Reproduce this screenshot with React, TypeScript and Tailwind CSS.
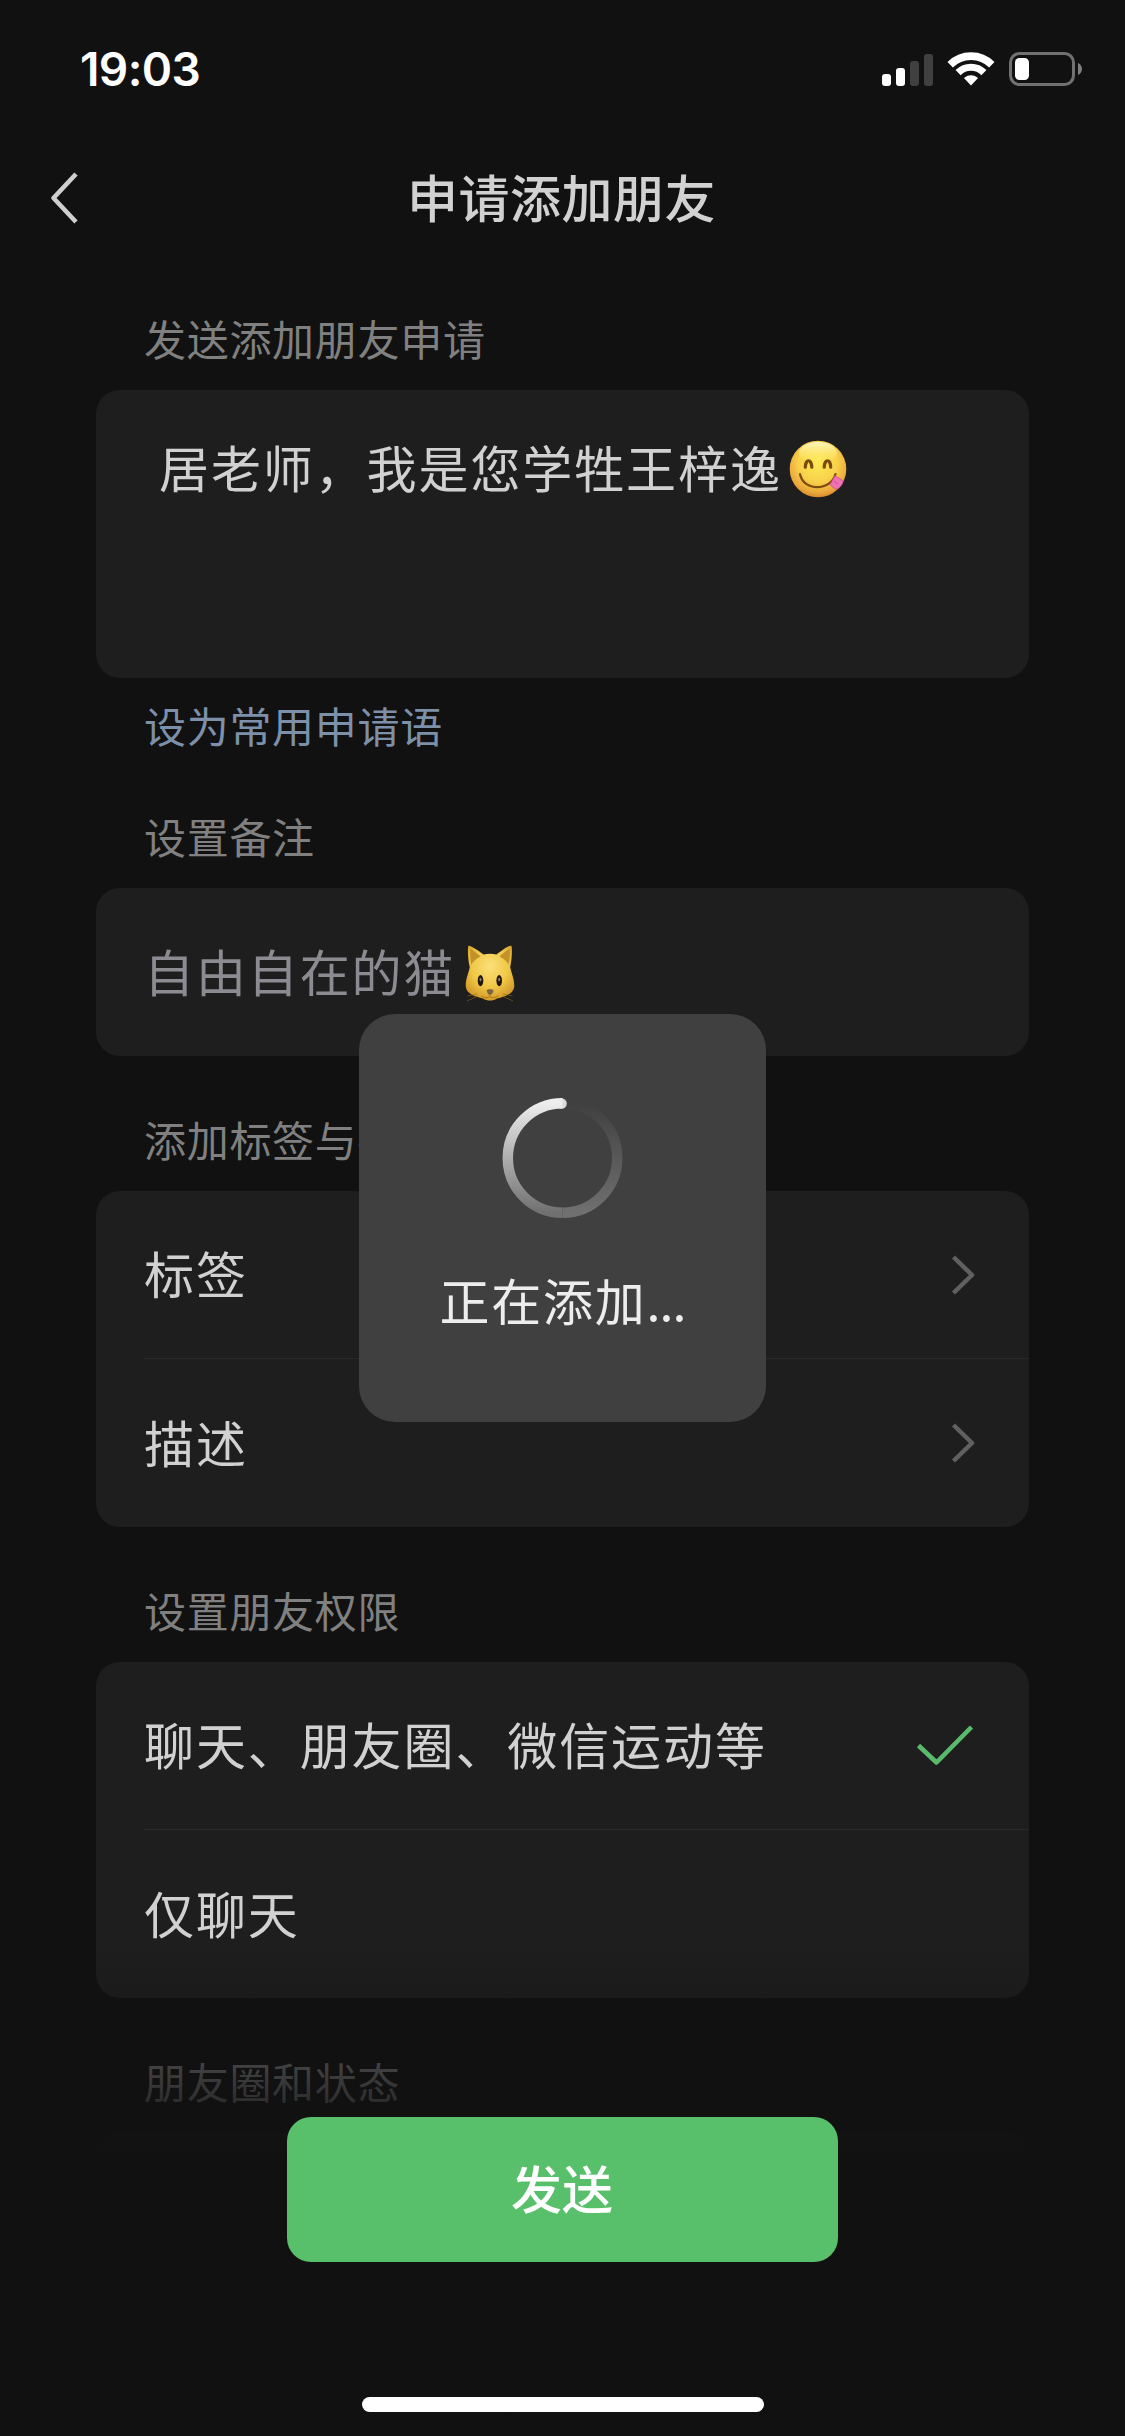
import React from "react";

interface SectionLabelProps {
  children: React.ReactNode;
  className?: string;
}

interface RowProps {
  title: string;
  divider?: boolean;
  children?: React.ReactNode;
}

const StatusBar: React.FC = () => {
  return (
    <div className="flex h-[132px] shrink-0 items-start justify-between pl-[80px] pr-[42px] pt-[50px] text-white">
      <span className="font-[Inter,sans-serif] text-[46px] font-semibold leading-[38px] tracking-[-0.6px]">
        19:03
      </span>
      <div className="flex items-center gap-[14px] pt-[2px]">
        <div className="flex h-[33px] items-end gap-[5px]">
          <span className="h-[12px] w-[9px] rounded-[3px] bg-white" />
          <span className="h-[18px] w-[9px] rounded-[3px] bg-white" />
          <span className="h-[25px] w-[9px] rounded-[3px] bg-[#404040]" />
          <span className="h-[32px] w-[9px] rounded-[3px] bg-[#404040]" />
        </div>
        <svg width="48" height="34" viewBox="0 0 48 34" fill="none">
          <path d="M3.2 12.7A29.4 29.4 0 0 1 44.8 12.7" stroke="#fff" strokeWidth="7.6" />
          <path d="M11.1 20.6A18.2 18.2 0 0 1 36.9 20.6" stroke="#fff" strokeWidth="7.2" />
          <path d="M24 33.5L17.4 26.6Q17 26 17.6 25.5A10.5 10.5 0 0 1 30.4 25.5Q31 26 30.6 26.6Z" fill="#fff" />
        </svg>
        <svg width="74" height="34" viewBox="0 0 74 34" fill="none">
          <rect x="1.5" y="1.5" width="63" height="31" rx="9" stroke="#717171" strokeWidth="3" />
          <rect x="6" y="6" width="14" height="22" rx="4.5" fill="#fff" />
          <path d="M69 11C74.3 13 74.3 21 69 23Z" fill="#808080" />
        </svg>
      </div>
    </div>
  );
};

const NavBar: React.FC = () => {
  return (
    <header className="grid h-[132px] shrink-0 grid-cols-[160px_1fr_162px] items-center">
      <svg className="ml-[48px]" width="32" height="54" viewBox="0 0 32 54" fill="none">
        <path d="M28 3L5.5 27L28 51" stroke="#cfcfcf" strokeWidth="4.6" strokeLinejoin="round" />
      </svg>
      <h1 className="pb-[5px] text-center text-[51px] font-medium leading-[60px] tracking-[0.5px]">申请添加朋友</h1>
    </header>
  );
};

const SectionLabel: React.FC<SectionLabelProps> = ({ children, className = "h-[135px]" }) => {
  return (
    <div className={`flex shrink-0 items-end pb-[22px] pl-[48px] ${className}`}>
      <h2 className="whitespace-nowrap text-[42px] leading-[60px] tracking-[0.7px] text-[#808080]">
        {children}
      </h2>
    </div>
  );
};

const Row: React.FC<RowProps> = ({ title, divider, children }) => {
  return (
    <div className="flex h-[168px] pl-[48px]">
      <div
        className={`flex grow items-center justify-between pr-[54px] ${divider ? "border-b border-[#292929]" : ""}`}
      >
        <span className="pb-[5px] text-[50px] leading-[60px] tracking-[1.9px]">{title}</span>
        {children}
      </div>
    </div>
  );
};

const Chevron: React.FC = () => {
  return (
    <svg width="24" height="42" viewBox="0 0 24 42" fill="none">
      <path d="M2.5 3L21 21L2.5 39" stroke="#606060" strokeWidth="4.5" strokeLinejoin="round" />
    </svg>
  );
};

const YumFace: React.FC = () => {
  return (
    <svg className="mt-[6px]" width="58" height="58" viewBox="0 0 58 58" fill="none">
      <defs>
        <radialGradient id="face" cx="0.5" cy="0.38" r="0.64">
          <stop offset="0" stopColor="#fdea55" />
          <stop offset="0.55" stopColor="#f8d04a" />
          <stop offset="0.85" stopColor="#eba63c" />
          <stop offset="1" stopColor="#d4822a" />
        </radialGradient>
        <linearGradient id="shine" x1="0" y1="0" x2="0" y2="1">
          <stop offset="0" stopColor="#fffbd0" stopOpacity="0.9" />
          <stop offset="1" stopColor="#fff25f" stopOpacity="0" />
        </linearGradient>
      </defs>
      <circle cx="29" cy="29" r="28.3" fill="url(#face)" />
      <ellipse cx="29" cy="13" rx="19" ry="11" fill="url(#shine)" />
      <path d="M16.3 27.2C16.6 18.6 22.4 18.6 22.8 27.2" stroke="#7c4a0c" strokeWidth="3.2" strokeLinecap="round" />
      <path d="M35.2 27.2C35.6 18.6 41.4 18.6 41.7 27.2" stroke="#7c4a0c" strokeWidth="3.2" strokeLinecap="round" />
      <path d="M11 34C14 51.5 42 51.5 46.5 34" stroke="#7c4a0c" strokeWidth="2.2" strokeLinecap="round" />
      <path
        d="M46.2 35.8L53.2 40.2Q54.6 41.4 53.4 43.4C50.8 48.4 47.6 49.6 45.4 48.2L41 44.8Z"
        fill="#ee72b4"
        stroke="#dd529a"
        strokeWidth="1"
        strokeLinejoin="round"
      />
      <path d="M45 41L48.6 44" stroke="#d84a94" strokeWidth="1" strokeLinecap="round" />
    </svg>
  );
};

const CatFace: React.FC = () => {
  return (
    <svg className="mt-[2px]" width="50" height="58" viewBox="0 0 50 58" fill="none">
      <defs>
        <radialGradient id="cat" cx="0.5" cy="0.38" r="0.62">
          <stop offset="0" stopColor="#fbe07a" />
          <stop offset="0.6" stopColor="#f0c846" />
          <stop offset="1" stopColor="#d49c2a" />
        </radialGradient>
      </defs>
      <path
        d="M3.5 1.8C5 .8 14 7 18.5 10.6C22.5 9.4 27.5 9.4 31.5 10.6C36 7 44.5 .8 46.3 1.8C47.5 4 46.8 17 45.2 23C46.5 30 49.3 34 49.3 42C49 50 39 53.2 32 54.4C28 57.2 22 57.2 18 54.4C11 53.2 1 50 .7 42C.7 34 3.5 30 4.8 23C3 17 2.3 4 3.5 1.8Z"
        fill="url(#cat)"
      />
      <path d="M5.4 4.5C8 6.5 13 10 15.5 12.5C11 14.5 8 17.5 6.3 20.5C5.4 15 4.8 9 5.4 4.5Z" fill="#c29229" />
      <path d="M44.6 4.5C42 6.5 37 10 34.5 12.5C39 14.5 42 17.5 43.7 20.5C44.6 15 45.2 9 44.6 4.5Z" fill="#c29229" />
      <ellipse cx="15.5" cy="36.6" rx="2.8" ry="5.6" fill="#201606" />
      <ellipse cx="34.2" cy="36.6" rx="2.8" ry="5.6" fill="#201606" />
      <ellipse cx="15.5" cy="35.6" rx="1" ry="1.8" fill="#8b8579" />
      <ellipse cx="34.2" cy="35.6" rx="1" ry="1.8" fill="#8b8579" />
      <path d="M21.6 46.4C22.2 44.8 28 44.8 28.6 46.4C28.4 49 26 50.8 25 51C24 50.8 21.8 49 21.6 46.4Z" fill="#7b6640" />
      <path d="M25 51V52.5C22.5 54.4 18.5 53.8 16.5 51.6M25 52.5C27.5 54.4 31.5 53.8 33.5 51.6" stroke="#b9801f" strokeWidth="1.1" />
      <path d="M12 50L2.5 52M13 52L2 57M38 50L47.5 52M37 52L48 57" stroke="#8a6420" strokeWidth="0.6" />
    </svg>
  );
};

const LoadingToast: React.FC = () => {
  return (
    <div className="absolute left-[359px] top-[1014px] flex h-[408px] w-[407px] flex-col items-center rounded-[36px] bg-[#404040] pt-[84px]">
      <svg width="121" height="120" viewBox="0 0 121 121" fill="none">
        <defs>
          <linearGradient id="spinLeft" x1="0" y1="0" x2="0" y2="1">
            <stop offset="0" stopColor="#ededed" />
            <stop offset="1" stopColor="#707070" />
          </linearGradient>
          <linearGradient id="spinRight" x1="0" y1="0" x2="0" y2="1">
            <stop offset="0" stopColor="#404040" />
            <stop offset="1" stopColor="#707070" />
          </linearGradient>
        </defs>
        <path d="M60.5 5.3A55.2 55.2 0 0 1 60.5 115.7" stroke="url(#spinRight)" strokeWidth="10.6" />
        <circle cx="59.5" cy="5.5" r="5.3" fill="#dadada" />
        <path d="M60.5 5.3A55.2 55.2 0 0 0 60.5 115.7" stroke="url(#spinLeft)" strokeWidth="10.6" />
      </svg>
      <span className="mt-[51px] text-[50px] leading-[60px] tracking-[1.7px] text-[#ededed]">
        正在添加<span className="tracking-[-0.9px]">...</span>
      </span>
    </div>
  );
};

const App: React.FC = () => {
  return (
    <div className="relative flex h-[2436px] w-[1125px] flex-col overflow-hidden bg-[#111111] font-['Noto_Sans_CJK_SC',sans-serif] text-[#d1d1d1]">
      <StatusBar />
      <NavBar />

      <main className="flex min-h-0 grow flex-col overflow-hidden px-[96px]">
        <SectionLabel className="h-[126px]">发送添加朋友申请</SectionLabel>
        <div className="flex h-[288px] shrink-0 items-start rounded-[24px] bg-[#1e1e1e] pl-[63px] pt-[44px]">
          <p className="flex items-center gap-[7px] text-[50px] leading-[60px] tracking-[1.9px]">
            居老师，我是您学牲王梓逸
            <YumFace />
          </p>
        </div>
        <div className="flex h-[75px] shrink-0 items-end pl-[48px]">
          <a className="-mb-[2px] text-[42px] leading-[60px] tracking-[0.7px] text-[#7d90a9]">设为常用申请语</a>
        </div>

        <SectionLabel>设置备注</SectionLabel>
        <div className="flex h-[168px] shrink-0 items-center gap-[10px] rounded-[24px] bg-[#1e1e1e] pl-[48px]">
          <span className="pb-[5px] text-[50px] leading-[60px] tracking-[1.9px] text-[#8c8b92]">自由自在的猫</span>
          <CatFace />
        </div>

        <SectionLabel>添加标签与描述</SectionLabel>
        <div className="shrink-0 rounded-[24px] bg-[#1e1e1e]">
          <Row title="标签" divider>
            <Chevron />
          </Row>
          <Row title="描述">
            <Chevron />
          </Row>
        </div>

        <SectionLabel>设置朋友权限</SectionLabel>
        <div className="shrink-0 rounded-[24px] bg-[#1e1e1e]">
          <Row title="聊天、朋友圈、微信运动等" divider>
            <svg className="mb-[1px] mr-[1px]" width="58" height="42" viewBox="0 0 58 42" fill="none">
              <path d="M2.5 21.5L20.5 38.5L55.5 3" stroke="#5aba6b" strokeWidth="4.6" strokeLinejoin="round" />
            </svg>
          </Row>
          <Row title="仅聊天" />
        </div>

        <SectionLabel>朋友圈和状态</SectionLabel>
        <div className="h-[168px] shrink-0 rounded-[24px] bg-[#1e1e1e]" />
      </main>

      {/* bottom bar, fades the list out behind the button */}
      <footer className="absolute inset-x-0 bottom-0 flex h-[490px] flex-col items-center bg-linear-to-b from-[#111111]/0 to-[#111111] to-[210px] pt-[171px]">
        <button className="h-[145px] w-[551px] rounded-[24px] bg-[#58bf6b] pb-[5px] pr-[1px] text-[51px] font-medium leading-[60px] text-white">
          发送
        </button>
        <div className="mt-[135px] h-[15px] w-[402px] rounded-full bg-white" />
      </footer>

      <LoadingToast />
    </div>
  );
};

export default App;
